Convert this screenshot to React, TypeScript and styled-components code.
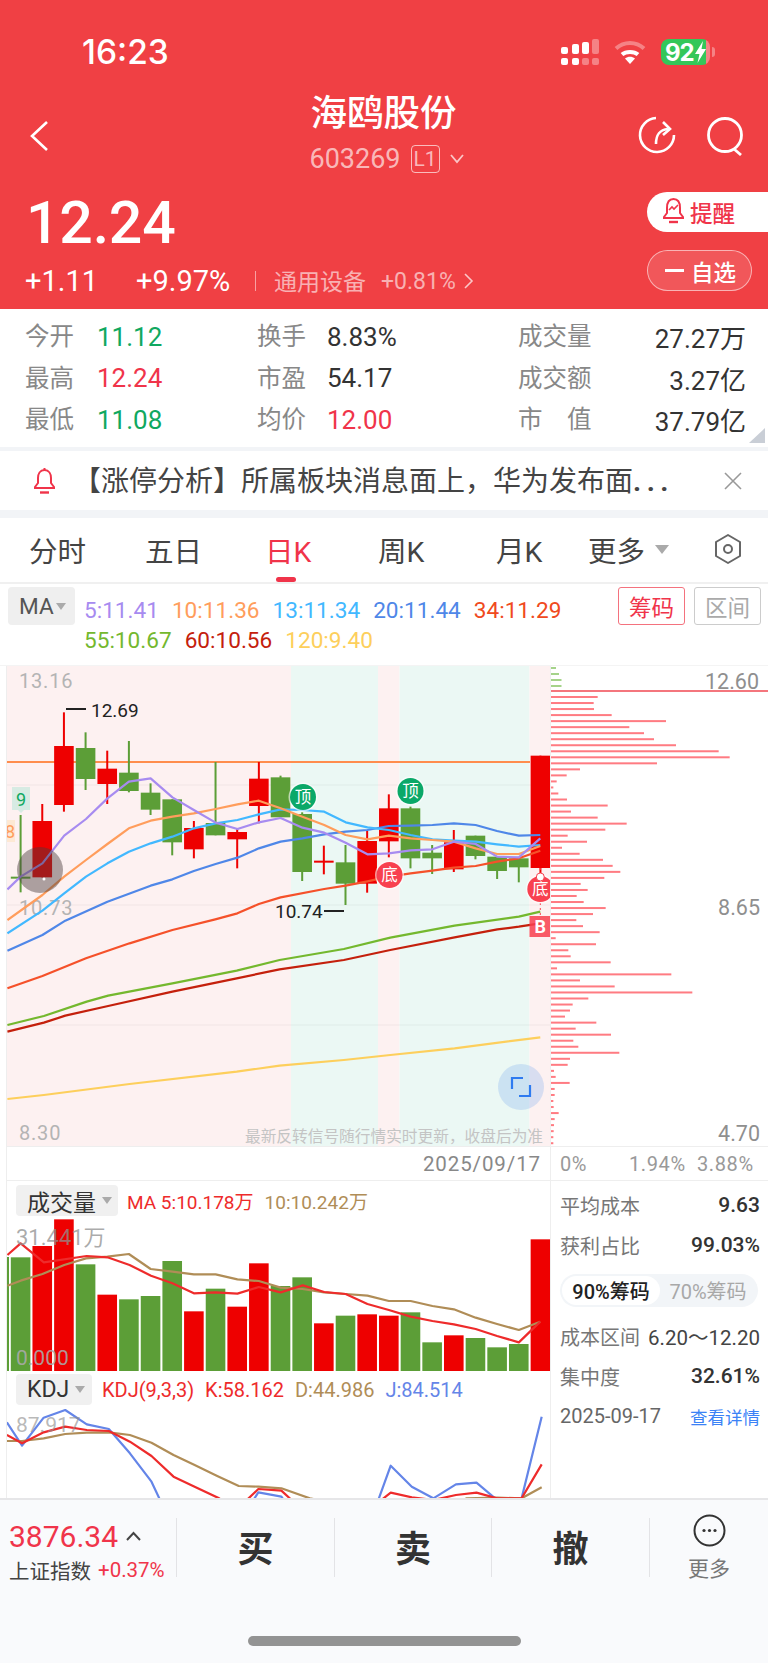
import * as React from 'react'
import styled, { createGlobalStyle } from 'styled-components'

const RED = '#f0344a'
const UP = '#ee0000'
const DOWN = '#5c9e37'
const FONT = 'Roboto, "Noto Sans CJK SC", sans-serif'

const GlobalStyle = createGlobalStyle`
    html, body { margin: 0; padding: 0; background: #fff; }
    * { box-sizing: border-box; }
    #root { width: 768px; height: 1663px; overflow: hidden; font-family: ${FONT}; }
`

const Page = styled.div`
    width: 768px;
    height: 1663px;
    display: flex;
    flex-direction: column;
    overflow: hidden;
    background: #fff;
`

/* ---------- red header ---------- */
const Header = styled.header`
    height: 309px;
    background: #f04044;
    color: #fff;
    flex: none;
`
const StatusBar = styled.div`
    height: 88px;
    padding: 16px 58px 0 82px;
    display: flex;
    align-items: center;
    justify-content: space-between;
`
const Clock = styled.span`
    font-family: Inter, sans-serif;
    font-size: 33.5px;
    font-weight: 500;
`
const StatusIcons = styled.div`
    display: flex;
    align-items: center;
    gap: 15px;
`
const Battery = styled.div`
    position: relative;
    width: 49px;
    height: 26px;
    border-radius: 8px;
    background: linear-gradient(90deg, #34c759 92%, rgba(255, 255, 255, .35) 92%);
    display: flex;
    align-items: center;
    padding-left: 4px;
    font-family: Inter, sans-serif;
    font-size: 24px;
    font-weight: 700;
    letter-spacing: -1px;
    &::after {
        content: '';
        position: absolute;
        right: -5px;
        top: 8px;
        width: 3px;
        height: 10px;
        border-radius: 0 3px 3px 0;
        background: rgba(255, 255, 255, .35);
    }
`
const NavBar = styled.nav`
    height: 92px;
    padding: 4px 24px 0 29px;
    display: grid;
    grid-template-columns: 281px 153px 1fr;
    align-items: center;
`
const TitleBlock = styled.div`
    align-self: flex-start;
    margin-top: -2px;
    display: flex;
    flex-direction: column;
    align-items: center;
`
const Title = styled.h1`
    margin: 2px 6px -2px 0;
    font-size: 36.5px;
    line-height: 44px;
    font-weight: 500;
    white-space: nowrap;
`
const CodeLine = styled.div`
    margin-top: 10px;
    height: 30px;
    display: flex;
    align-items: center;
    gap: 10px;
    font-size: 27px;
    color: rgba(255, 255, 255, .65);
`
const LevelTag = styled.span`
    width: 29px;
    height: 28px;
    border: 1px solid rgba(255, 255, 255, .65);
    border-radius: 4px;
    display: flex;
    align-items: center;
    justify-content: center;
    font-size: 21px;
`
const NavActions = styled.div`
    justify-self: end;
    display: flex;
    gap: 30px;
`
const QuoteRow = styled.div`
    height: 129px;
    display: flex;
    justify-content: space-between;
`
const QuoteLeft = styled.div`
    padding: 13px 0 0 25px;
`
const Price = styled.div`
    padding-left: 1px;
    font-size: 59px;
    line-height: 60px;
    font-weight: 500;
    letter-spacing: -.2px;
`
const ChangeLine = styled.div`
    margin-top: 13px;
    height: 30px;
    display: flex;
    align-items: center;
`
const ChangeValue = styled.span<{ $w: number }>`
    width: ${p => p.$w}px;
    font-size: 29px;
    white-space: nowrap;
`
const ChangeDivider = styled.span`
    width: 1px;
    height: 20px;
    margin-right: 18px;
    background: rgba(255, 255, 255, .5);
`
const SectorName = styled.span`
    width: 107px;
    margin-top: -2px;
    font-size: 23px;
    color: rgba(255, 255, 255, .6);
`
const SectorChange = styled.span`
    width: 83px;
    font-size: 23px;
    color: rgba(255, 255, 255, .6);
`
const QuoteRight = styled.div`
    width: 121px;
    padding-top: 12px;
    display: flex;
    flex-direction: column;
    gap: 18px;
    align-items: flex-start;
`
const RemindButton = styled.div`
    width: 121px;
    height: 40px;
    padding-left: 16px;
    border-radius: 20px 0 0 20px;
    background: #fff;
    color: ${RED};
    display: flex;
    align-items: center;
    gap: 6px;
    font-size: 22.5px;
    font-weight: 500;
`
const WatchButton = styled.div`
    width: 105px;
    height: 41px;
    padding-left: 17px;
    border-radius: 21px;
    border: 1px solid rgba(255, 255, 255, .55);
    background: rgba(255, 255, 255, .12);
    display: flex;
    align-items: center;
    gap: 7px;
    font-size: 22.5px;
    font-weight: 500;
`
const Minus = styled.span`
    width: 19px;
    height: 3px;
    background: #fff;
`

/* ---------- quote stats ---------- */
const Stats = styled.section`
    position: relative;
    height: 142px;
    flex: none;
    padding: 7px 22px 0 25px;
    border-bottom: 4px solid #f2f4f7;
    display: grid;
    grid-template-columns: 232px 261px 1fr;
    grid-auto-rows: 41.5px;
`
const Cell = styled.div<{ $labelWidth?: number }>`
    display: grid;
    grid-template-columns: ${p => (p.$labelWidth ? `${p.$labelWidth}px auto` : '1fr auto')};
    align-items: center;
`
const CellLabel = styled.span`
    margin-top: -4px;
    font-size: 24.5px;
    color: #888;
    white-space: pre;
`
const CellValue = styled.span<{ $color?: string }>`
    font-size: 26px;
    color: ${p => p.$color || '#333'};
`
const CornerMark = styled.span`
    position: absolute;
    right: 3px;
    bottom: 4px;
    width: 16px;
    height: 15px;
    background: #c9ced6;
    clip-path: polygon(100% 0, 100% 100%, 0 100%);
`

/* ---------- notice ---------- */
const Notice = styled.section`
    height: 59px;
    flex: none;
    padding: 0 26px 0 33px;
    display: flex;
    align-items: center;
    font-size: 28px;
    color: #444;
`
const NoticeText = styled.span`
    flex: 1;
    margin: -4px 0 0 17px;
    white-space: nowrap;
`
const Dots = styled.span`
    letter-spacing: 5.5px;
    font-weight: 700;
`
const Gap = styled.div`
    height: 8px;
    flex: none;
    background: #f2f4f7;
`

/* ---------- period tabs ---------- */
const Tabs = styled.nav`
    position: relative;
    height: 66px;
    flex: none;
    border-bottom: 2px solid #f0f0f0;
    font-size: 28.5px;
    color: #444;
    display: grid;
    grid-template-columns: 116px 120px 113px 118px 92px 126px 1fr;
    padding-left: 29px;
    align-items: center;
`
const Tab = styled.span<{ $active?: boolean }>`
    position: relative;
    height: 100%;
    padding-bottom: 2px;
    display: flex;
    align-items: center;
    gap: 10px;
    color: ${p => (p.$active ? RED : 'inherit')};
    ${p => p.$active && `
        &::after {
            content: '';
            position: absolute;
            left: 11px;
            bottom: 0;
            width: 20px;
            height: 5px;
            border-radius: 3px;
            background: ${RED};
        }
    `}
`
const Caret = styled.span<{ $size?: number; $color?: string }>`
    width: 0;
    height: 0;
    border-left: ${p => p.$size || 7}px solid transparent;
    border-right: ${p => p.$size || 7}px solid transparent;
    border-top: ${p => (p.$size || 7) + 2}px solid ${p => p.$color || '#aaa'};
`

/* ---------- ma legend ---------- */
const Legend = styled.section`
    height: 82px;
    flex: none;
    padding: 3px 7px 0 8px;
    display: flex;
    align-items: flex-start;
    font-size: 22.6px;
`
const IndicatorPick = styled.div`
    width: 67px;
    height: 38px;
    border-radius: 4px;
    background: #efefef;
    color: #555;
    display: flex;
    align-items: center;
    padding-left: 11px;
    gap: 2px;
`
const LegendLines = styled.div`
    margin: 8px 0 0 9px;
    display: flex;
    flex-direction: column;
`
const LegendLine = styled.div`
    height: 30px;
    display: flex;
    align-items: center;
    gap: 13px;
`
const LegendItem = styled.span<{ $color: string }>`
    color: ${p => p.$color};
    white-space: nowrap;
`
const LegendButtons = styled.div`
    margin-left: auto;
    display: flex;
    gap: 9px;
`
const OutlineButton = styled.span<{ $on?: boolean }>`
    width: 67px;
    height: 38px;
    border: 1px solid ${p => (p.$on ? '#f4727e' : '#ccc')};
    border-radius: 3px;
    color: ${p => (p.$on ? RED : '#aaa')};
    display: flex;
    align-items: center;
    justify-content: center;
    font-size: 22.5px;
`

/* ---------- charts ---------- */
const ChartBody = styled.section`
    flex: 1;
    min-height: 0;
    display: flex;
    border-top: 1px solid #f4f4f4;
    margin-top: -1px;
`
const LeftCol = styled.div`
    width: 544px;
    margin-left: 6px;
    flex: none;
    border-left: 1px solid #eee;
    display: flex;
    flex-direction: column;
`
const RightCol = styled.div`
    flex: 1;
    border-left: 1px solid #eee;
    display: flex;
    flex-direction: column;
`
const Plot = styled.svg`
    display: block;
    flex: none;
    font-family: ${FONT};
`
const AxisRow = styled.div`
    height: 35px;
    flex: none;
    border-top: 1px solid #eee;
    border-bottom: 1px solid #eee;
    display: flex;
    align-items: center;
    justify-content: flex-end;
    padding-right: 9px;
    font-size: 20.5px;
    letter-spacing: .9px;
    color: #888;
`
const ChipAxis = styled(AxisRow)`
    justify-content: flex-start;
    padding: 0 0 0 9px;
    font-size: 20px;
    letter-spacing: .6px;
    color: #999;
`
const ChipTick = styled.span<{ $w: number }>`
    width: ${p => p.$w}px;
`
const PanelLegend = styled.div<{ $h: number; $top: number }>`
    height: ${p => p.$h}px;
    flex: none;
    padding: ${p => p.$top}px 0 0 9px;
    display: flex;
    align-items: flex-start;
`
const PanelPick = styled.div<{ $w: number }>`
    width: ${p => p.$w}px;
    height: 31px;
    border-radius: 4px;
    background: #f0f0f0;
    color: #333;
    display: flex;
    align-items: center;
    gap: 6px;
    padding-left: 11px;
    font-size: 23px;
`
const PanelValues = styled.div<{ $offset: number; $size: number }>`
    height: 31px;
    margin-left: ${p => p.$offset}px;
    display: flex;
    align-items: center;
    gap: 11px;
    font-size: ${p => p.$size}px;
`
const ChipStats = styled.div`
    padding: 4px 8px 0 9px;
    display: flex;
    flex-direction: column;
`
const ChipRow = styled.div`
    height: 40px;
    display: flex;
    align-items: center;
    justify-content: space-between;
    font-size: 20px;
    color: #777;
    white-space: nowrap;
`
const ChipValue = styled.span`
    font-size: 21px;
    font-weight: 500;
    color: #333;
`
const RangeValue = styled.span`
    font-size: 20.5px;
    color: #444;
`
const Switcher = styled.div`
    height: 33px;
    margin: 9px 2px 9px 0;
    padding: 2px;
    border-radius: 17px;
    background: #f2f5f8;
    display: grid;
    grid-template-columns: 98px 1fr;
    font-size: 20px;
`
const SwitchItem = styled.span<{ $active?: boolean }>`
    border-radius: 15px;
    background: ${p => (p.$active ? '#fff' : 'transparent')};
    color: ${p => (p.$active ? '#222' : '#a8a8a8')};
    font-weight: ${p => (p.$active ? 500 : 400)};
    display: flex;
    align-items: center;
    justify-content: center;
    white-space: nowrap;
`
const DateText = styled.span`
    font-size: 20px;
    color: #666;
`
const DetailLink = styled.span`
    font-size: 17.5px;
    color: #3b82f6;
`

/* ---------- bottom bar ---------- */
const BottomBar = styled.footer`
    position: relative;
    height: 165px;
    flex: none;
    border-top: 2px solid #e6e6e8;
    background: #f9fafc;
    display: flex;
    padding-top: 18px;
    align-items: flex-start;
`
const IndexCell = styled.div`
    width: 177px;
    height: 59px;
    padding-left: 9px;
    border-right: 1px solid #e3e3e6;
`
const IndexPrice = styled.div`
    height: 36px;
    display: flex;
    align-items: center;
    gap: 8px;
    font-size: 30px;
    color: ${RED};
`
const IndexName = styled.div`
    margin-top: 1px;
    display: flex;
    align-items: center;
    gap: 7px;
    font-size: 20.5px;
    color: #444;
`
const IndexChange = styled.span`
    color: ${RED};
`
const TradeCell = styled.div<{ $w: number }>`
    width: ${p => p.$w}px;
    height: 59px;
    padding-bottom: 4px;
    border-right: 1px solid #e3e3e6;
    display: flex;
    align-items: center;
    justify-content: center;
    font-size: 36px;
    font-weight: 700;
    color: #333;
`
const MoreCell = styled.div`
    flex: 1;
    margin-top: -4px;
    display: flex;
    flex-direction: column;
    align-items: center;
    gap: 5px;
    font-size: 21px;
    color: #777;
`
const HomeBar = styled.div`
    position: absolute;
    left: 248px;
    bottom: 17px;
    width: 273px;
    height: 10px;
    border-radius: 5px;
    background: #939393;
`

/* ---------- data, read off the chart in px ---------- */
type Pt = number[]
const candleX = (i: number) => 19.6 + 21.66 * i

// wick top, body top, body bottom, wick bottom, up?
const candles: [number, number, number, number, boolean][] = [
    [465, 650, 656, 697, false], [432, 483, 652, 652, true], [157, 258, 435, 455, true],
    [217, 264, 357, 390, false], [272, 326, 372, 432, true], [243, 338, 393, 397, false],
    [370, 398, 449, 465, false], [418, 418, 547, 586, false], [483, 504, 568, 595, true],
    [306, 489, 526, 526, false], [506, 516, 538, 625, true], [306, 356, 438, 490, true],
    [347, 352, 472, 472, false], [457, 462, 636, 663, false], [557, 602, 606, 643, true],
    [555, 607, 671, 735, false], [513, 543, 671, 698, true], [403, 445, 544, 592, true],
    [440, 445, 595, 625, false], [555, 578, 595, 642, false], [510, 547, 628, 636, true],
    [527, 527, 588, 598, false], [590, 590, 633, 657, false], [595, 595, 622, 667, false],
    [287, 287, 624, 640, true],
]

const ma5: Pt[] = [[18, 688], [55, 650], [116, 610], [177, 527], [238, 477], [298, 415], [358, 365], [419, 355], [480, 412], [540, 450], [601, 488], [662, 507], [722, 487], [783, 474], [844, 503], [905, 518], [965, 548], [1026, 583], [1086, 580], [1147, 571], [1208, 568], [1268, 545], [1329, 552], [1389, 590], [1450, 592], [1510, 535]]
const ma10: Pt[] = [[18, 780], [116, 705], [177, 650], [238, 600], [298, 552], [358, 505], [419, 482], [480, 470], [540, 460], [601, 447], [662, 433], [722, 422], [783, 445], [844, 470], [905, 495], [965, 525], [1026, 538], [1086, 527], [1147, 535], [1208, 540], [1268, 545], [1329, 565], [1389, 582], [1450, 582], [1510, 558]]
const ma13: Pt[] = [[18, 820], [116, 752], [177, 700], [238, 650], [298, 610], [358, 575], [419, 550], [480, 530], [540, 505], [601, 490], [662, 480], [722, 463], [783, 448], [844, 450], [905, 455], [965, 487], [1026, 502], [1086, 510], [1147, 525], [1208, 538], [1268, 542], [1329, 545], [1389, 553], [1450, 560], [1510, 555]]
const ma20: Pt[] = [[18, 872], [116, 825], [180, 782], [298, 725], [419, 677], [480, 658], [540, 633], [601, 612], [662, 593], [722, 565], [783, 545], [844, 535], [905, 523], [965, 515], [1026, 510], [1086, 498], [1147, 497], [1208, 495], [1268, 490], [1329, 495], [1389, 513], [1450, 527], [1510, 525]]
const ma34: Pt[] = [[18, 985], [116, 948], [238, 895], [360, 850], [480, 810], [600, 778], [662, 760], [722, 732], [783, 712], [905, 687], [965, 677], [1026, 664], [1086, 650], [1147, 640], [1208, 632], [1268, 623], [1329, 618], [1389, 605], [1450, 595], [1510, 572]]
const ma55: Pt[] = [[18, 1095], [120, 1068], [240, 1025], [300, 1007], [480, 970], [660, 932], [780, 900], [960, 867], [1090, 833], [1270, 797], [1450, 770], [1510, 755]]
const ma60: Pt[] = [[18, 1115], [120, 1088], [180, 1067], [300, 1038], [480, 995], [660, 955], [780, 928], [960, 900], [1090, 870], [1270, 832], [1390, 808], [1450, 800], [1510, 790]]
const ma120: Pt[] = [[18, 1317], [120, 1305], [360, 1272], [660, 1235], [780, 1217], [960, 1200], [1090, 1185], [1270, 1165], [1510, 1132]]

const chipBars = [173, 161, 162, 215, 378, 268, 312, 342, 408, 536, 569, 351, 120, 80, 50, 40, 55, 81, 203, 93, 173, 260, 196, 83, 141, 66, 119, 189, 218, 241, 193, 122, 143, 110, 131, 197, 159, 109, 129, 179, 47, 168, 85, 92, 212, 51, 394, 120, 224, 457, 145, 98, 90, 75, 169, 107, 213, 100, 115, 238, 90, 83, 42, 47, 89, 44, 44, 40, 41, 56, 44, 42, 41, 40, 40]

const volumes: [number, boolean][] = [
    [322, false], [288, true], [208, true], [343, false], [434, true], [448, false], [438, false],
    [333, false], [484, true], [416, false], [470, true], [340, true], [408, false], [382, false],
    [520, true], [497, false], [493, true], [497, true], [487, false], [577, false], [556, true],
    [564, false], [592, false], [582, false], [268, true],
]
const volMa5: Pt[] = [[18, 315], [55, 280], [120, 337], [240, 318], [298, 322], [360, 345], [420, 377], [480, 400], [540, 430], [600, 427], [662, 431], [722, 411], [783, 427], [845, 406], [905, 426], [965, 432], [1026, 462], [1086, 480], [1147, 500], [1208, 513], [1268, 523], [1329, 537], [1389, 558], [1450, 577], [1510, 515]]
const volMa10: Pt[] = [[18, 407], [55, 392], [116, 372], [177, 345], [238, 325], [298, 320], [358, 312], [419, 357], [480, 365], [540, 373], [601, 373], [662, 388], [722, 393], [783, 413], [844, 417], [905, 427], [965, 432], [1026, 437], [1086, 453], [1147, 453], [1208, 468], [1268, 478], [1329, 503], [1389, 522], [1450, 540], [1510, 515]]

const kdjJ: Pt[] = [[12, 157], [43, 227], [87, 143], [131, 120], [175, 163], [220, 177], [263, 250], [307, 335], [350, 470], [480, 470], [525, 367], [572, 380], [615, 470], [750, 470], [795, 287], [838, 350], [882, 385], [928, 343], [970, 338], [1012, 390], [1062, 385], [1103, 140]]
const kdjK: Pt[] = [[12, 195], [43, 220], [87, 187], [131, 170], [175, 180], [220, 183], [263, 215], [307, 258], [352, 320], [395, 350], [445, 385], [480, 420], [525, 357], [572, 362], [615, 420], [750, 420], [795, 368], [838, 382], [882, 390], [928, 375], [970, 368], [1012, 385], [1062, 385], [1103, 283]]
const kdjD: Pt[] = [[12, 213], [43, 213], [87, 205], [131, 192], [175, 188], [220, 187], [263, 195], [307, 218], [352, 255], [395, 285], [440, 317], [485, 348], [525, 350], [572, 355], [630, 385], [750, 420], [900, 420], [950, 385], [1012, 383], [1062, 385], [1103, 352]]

const mapY = (y: number, base: number) => base + y / 3
const points = (pts: Pt[], sx: number, base: number) => pts.map(([x, y]) => `${x / sx},${mapY(y, base)}`).join(' ')

const Line = ({ pts, color, sx = 2.8, base = 660, width = 2.2 }: { pts: Pt[]; color: string; sx?: number; base?: number; width?: number }) => (
    <polyline points={points(pts, sx, base)} fill="none" stroke={color} strokeWidth={width} strokeLinejoin="round" />
)

const Badge = ({ x, y, label, color }: { x: number; y: number; label: string; color: string }) => (
    <g>
        <circle cx={x} cy={y} r={14.5} fill="#fff" opacity={.6} />
        <circle cx={x} cy={y} r={13} fill={color} />
        <text x={x} y={y + 6} textAnchor="middle" fontSize={16.5} fill="#fff">{label}</text>
    </g>
)

const KChart = () => {
    const y = (v: number) => mapY(v, 660)
    return (
        <Plot width={544} height={480} viewBox="6 666 544 480">
            <rect x={6} y={666} width={284} height={480} fill="#fdf1f1" />
            <rect x={290} y={666} width={87} height={480} fill="#ebf8f4" />
            <rect x={377} y={666} width={21.5} height={480} fill="#fdf1f1" />
            <rect x={398.5} y={666} width={130} height={480} fill="#ebf8f4" />
            <rect x={528.5} y={666} width={22} height={480} fill="#fdf1f1" />
            {[785, 905, 1025].map(g => <line key={g} x1={6} x2={550} y1={g} y2={g} stroke="#000" strokeOpacity={.05} />)}
            <line x1={6} x2={529} y1={762} y2={762} stroke="#ff8d4d" strokeWidth={2} />

            <text x={18} y={688} fontSize={20} letterSpacing={.8} fill="#b4b4b4">13.16</text>
            <text x={18} y={915} fontSize={20} letterSpacing={.8} fill="#b4b4b4">10.73</text>
            <text x={18} y={1140} fontSize={20} letterSpacing={.8} fill="#b4b4b4">8.30</text>

            <path d="M11 787h18v23h-6l-3 3-3-3h-6z" fill="#d7ebe3" />
            <text x={20} y={806} textAnchor="middle" fontSize={18} fill="#10a860">9</text>
            <rect x={0} y={820} width={14} height={22} fill="#fde9d4" />
            <text x={4} y={838} fontSize={18} fill="#ff9d5c">8</text>

            {candles.map(([wt, bt, bb, wb, up], i) => (
                <g key={i} fill={up ? UP : DOWN}>
                    <rect x={candleX(i) - 1} y={y(wt)} width={2} height={(wb - wt) / 3} />
                    <rect x={candleX(i) - 9.8} y={y(bt)} width={19.6} height={Math.max((bb - bt) / 3, 2)} />
                </g>
            ))}

            <Line pts={ma120} color="#fdcf5c" />
            <Line pts={ma55} color="#74b82e" />
            <Line pts={ma60} color="#c4200c" />
            <Line pts={ma34} color="#f5512a" />
            <Line pts={ma20} color="#4f87e8" />
            <Line pts={ma13} color="#42b8ff" />
            <Line pts={ma10} color="#ff9d5c" />
            <Line pts={ma5} color="#a78bf0" />

            <rect x={65} y={708} width={20} height={2} fill="#222" />
            <text x={90} y={717} fontSize={19} fill="#222">12.69</text>
            <text x={274} y={918} fontSize={19} fill="#222">10.74</text>
            <rect x={323} y={910} width={20} height={2} fill="#222" />

            <circle cx={39} cy={870} r={23} fill="#4a3c3c" fillOpacity={.45} />
            <circle cx={43} cy={879} r={1.5} fill="#fff" />

            <Badge x={302} y={797} label="顶" color="#0aa868" />
            <Badge x={409.5} y={791} label="顶" color="#0aa868" />
            <Badge x={388.5} y={875} label="底" color="#f8404f" />

            <line x1={539.3} x2={539.3} y1={868} y2={918} stroke="#f8404f" strokeDasharray="2 3" />
            <Badge x={539.3} y={889} label="底" color="#f8404f" />
            <circle cx={539.3} cy={877} r={4} fill="#fff" stroke="#f8404f" />
            <rect x={528.5} y={916} width={21.5} height={21} fill="#f8404f" fillOpacity={.85} />
            <text x={539.3} y={933} textAnchor="middle" fontSize={18} fontWeight={700} fill="#fff">B</text>

            <circle cx={520} cy={1087} r={23} fill="#7aa9ee" fillOpacity={.28} />
            <path d="M511 1089v-11h11M529 1085v11h-11" fill="none" stroke="#2f7bf0" strokeWidth={2.2} />

            <text x={244} y={1142} fontSize={15.7} fill="#c4c4c4">最新反转信号随行情实时更新，收盘后为准</text>
        </Plot>
    )
}

const ChipChart = () => (
    <Plot width={217} height={480} viewBox="551 666 217 480">
        {[[667, 5, '#a5d38a'], [673, 8, '#a5d38a'], [679, 10.5, '#a5d38a'], [685, 10.5, '#a5d38a']].map(([by, w, c]) => (
            <rect key={by as number} x={551} y={by as number} width={w as number} height={2} fill={c as string} />
        ))}
        <rect x={551} y={690} width={217} height={2} fill="#f4767d" />
        {chipBars.map((end, i) => (
            <rect key={i} x={551} y={696 + i * 6.03} width={(end - 33) / 3} height={2} fill="#ff7b82" />
        ))}
        <text x={759} y={689} textAnchor="end" fontSize={21.5} fill="#8f8f8f">12.60</text>
        <text x={760} y={915} textAnchor="end" fontSize={21.5} fill="#8f8f8f">8.65</text>
        <text x={760} y={1141} textAnchor="end" fontSize={21.5} fill="#8f8f8f">4.70</text>
    </Plot>
)

const VolumeChart = () => (
    <Plot width={544} height={155} viewBox="6 1216 544 155">
        <rect x={6} y={1257} width={2} height={114} fill={DOWN} />
        {volumes.map(([top, up], i) => (
            <rect key={i} x={candleX(i) - 9.8} y={mapY(top, 1150)} width={19.6} height={(663 - top) / 3} fill={up ? UP : DOWN} />
        ))}
        <Line pts={volMa10} color="#b08d57" base={1150} />
        <Line pts={volMa5} color="#ee2b2b" base={1150} />
        <text x={15} y={1245} fontSize={22} fill="#8f8f8f" fillOpacity={.75}>31.441万</text>
        <text x={15} y={1365} fontSize={21} fill="#aaa" fillOpacity={.9}>0.000</text>
    </Plot>
)

const KdjChart = () => (
    <Plot width={544} height={93} viewBox="6 1405 544 93">
        <Line pts={kdjJ} color="#6485e8" sx={2.04} base={1370} />
        <Line pts={kdjD} color="#b08d57" sx={2.04} base={1370} />
        <Line pts={kdjK} color="#ee2b2b" sx={2.04} base={1370} />
        <text x={15} y={1432} fontSize={21} fill="#8f8f8f" fillOpacity={.65}>87.917</text>
    </Plot>
)

/* ---------- icons ---------- */
const SignalIcon = () => (
    <svg width={38} height={26} viewBox="0 0 38 26">
        <g fill="#fff">
            <rect x={0} y={8} width={7} height={7} rx={2} />
            <rect x={11} y={5} width={7} height={10} rx={2} />
            <rect x={21} y={3} width={7} height={12} rx={2} />
            <rect x={0} y={19} width={7} height={7} rx={2} />
            <rect x={11} y={19} width={7} height={7} rx={2} />
        </g>
        <g fill="#fff" fillOpacity={.35}>
            <rect x={31} y={0} width={7} height={15} rx={2} />
            <rect x={21} y={19} width={7} height={7} rx={2} />
            <rect x={31} y={19} width={7} height={7} rx={2} />
        </g>
    </svg>
)
const WifiIcon = () => (
    <svg width={32} height={24} viewBox="0 0 32 24" fill="none" stroke="#fff">
        <path d="M2 8.5C10 1 22 1 30 8.5" strokeWidth={4} strokeOpacity={.35} />
        <path d="M8 14.5C12 11 20 11 24 14.5" strokeWidth={4} />
        <path d="M16 24l-5-5.5c3-2.4 7-2.4 10 0z" fill="#fff" stroke="none" />
    </svg>
)
const BoltIcon = () => (
    <svg width={13} height={22} viewBox="0 0 13 22">
        <path d="M9 0L1 13h4.5L3.5 22 12 8H7.5z" fill="#fff" />
    </svg>
)
const BackIcon = () => (
    <svg width={20} height={32} viewBox="0 0 20 32" fill="none" stroke="#fff" strokeWidth={2.6}>
        <path d="M18 2L3 16l15 14" />
    </svg>
)
const RefreshIcon = () => (
    <svg width={38} height={38} viewBox="0 0 38 38" fill="none" stroke="#fff" strokeWidth={2.6}>
        <path d="M18 2A17 17 0 1 0 36 19" />
        <path d="M18 28C18 19 21 14 30 13" />
        <path d="M25 6l7 7-7 6" />
    </svg>
)
const SearchIcon = () => (
    <svg width={38} height={40} viewBox="0 0 38 40" fill="none" stroke="#fff" strokeWidth={2.8}>
        <circle cx={19} cy={19} r={16.5} />
        <path d="M28 33l7 6" />
    </svg>
)
const ChevronDown = () => (
    <svg width={14} height={10} viewBox="0 0 14 10" fill="none" stroke="rgba(255,255,255,.7)" strokeWidth={1.8}>
        <path d="M1 1l6 7 6-7" />
    </svg>
)
const ChevronRight = () => (
    <svg width={10} height={16} viewBox="0 0 10 16" fill="none" stroke="rgba(255,255,255,.7)" strokeWidth={1.6}>
        <path d="M1 1l7 7-7 7" />
    </svg>
)
const RemindBell = () => (
    <svg width={21} height={32} viewBox="0 0 21 32" fill="none" stroke={RED} strokeWidth={2}>
        <path d="M10.500 3C5.500 3 4 7 4 12v5l-3 4v1h19v-1l-3-4v-5c0-5-1.500-9-6.500-9z" />
        <path d="M6 14l3-3 2 2 4-4" strokeWidth={1.6} />
        <path d="M6 26h9" strokeWidth={2.4} />
    </svg>
)
const NoticeBell = () => (
    <svg width={23} height={27} viewBox="0 0 23 27" fill="none" stroke={RED} strokeWidth={2}>
        <path d="M11.500 3C7 3 5 7 5 11v5l-3 4v1h19v-1l-3-4v-5c0-4-2-8-6.500-8z" />
        <path d="M11.500 1v2" />
        <path d="M7 25.500h9" strokeWidth={2.4} />
    </svg>
)
const CloseIcon = () => (
    <svg width={18} height={18} viewBox="0 0 18 18" fill="none" stroke="#999" strokeWidth={1.6}>
        <path d="M1 1l16 16M17 1L1 17" />
    </svg>
)
const HexIcon = () => (
    <svg width={28} height={30} viewBox="0 0 28 30" fill="none" stroke="#666" strokeWidth={2}>
        <path d="M14 1l12 7v14l-12 7-12-7V8z" strokeLinejoin="round" />
        <circle cx={14} cy={15} r={4} />
    </svg>
)
const CaretUp = () => (
    <svg width={15} height={10} viewBox="0 0 15 10" fill="none" stroke="#444" strokeWidth={2}>
        <path d="M1 9l6.500-7L14 9" />
    </svg>
)
const MoreIcon = () => (
    <svg width={33} height={33} viewBox="0 0 33 33" fill="none" stroke="#333" strokeWidth={2}>
        <circle cx={16.500} cy={16.500} r={15} />
        <g fill="#333" stroke="none">
            <circle cx={11} cy={16.500} r={1.6} />
            <circle cx={16.500} cy={16.500} r={1.6} />
            <circle cx={22} cy={16.500} r={1.6} />
        </g>
    </svg>
)

const GREEN_NUM = '#10a860'

const App = () => (
    <Page>
        <GlobalStyle />
        <Header>
            <StatusBar>
                <Clock>16:23</Clock>
                <StatusIcons>
                    <SignalIcon />
                    <WifiIcon />
                    <Battery>92<BoltIcon /></Battery>
                </StatusIcons>
            </StatusBar>
            <NavBar>
                <BackIcon />
                <TitleBlock>
                    <Title>海鸥股份</Title>
                    <CodeLine>
                        603269
                        <LevelTag>L1</LevelTag>
                        <ChevronDown />
                    </CodeLine>
                </TitleBlock>
                <NavActions>
                    <RefreshIcon />
                    <SearchIcon />
                </NavActions>
            </NavBar>
            <QuoteRow>
                <QuoteLeft>
                    <Price>12.24</Price>
                    <ChangeLine>
                        <ChangeValue $w={111}>+1.11</ChangeValue>
                        <ChangeValue $w={119}>+9.97%</ChangeValue>
                        <ChangeDivider />
                        <SectorName>通用设备</SectorName>
                        <SectorChange>+0.81%</SectorChange>
                        <ChevronRight />
                    </ChangeLine>
                </QuoteLeft>
                <QuoteRight>
                    <RemindButton><RemindBell />提醒</RemindButton>
                    <WatchButton><Minus />自选</WatchButton>
                </QuoteRight>
            </QuoteRow>
        </Header>

        <Stats>
            <Cell $labelWidth={72}><CellLabel>今开</CellLabel><CellValue $color={GREEN_NUM}>11.12</CellValue></Cell>
            <Cell $labelWidth={70}><CellLabel>换手</CellLabel><CellValue>8.83%</CellValue></Cell>
            <Cell><CellLabel>成交量</CellLabel><CellValue>27.27万</CellValue></Cell>
            <Cell $labelWidth={72}><CellLabel>最高</CellLabel><CellValue $color={RED}>12.24</CellValue></Cell>
            <Cell $labelWidth={70}><CellLabel>市盈</CellLabel><CellValue>54.17</CellValue></Cell>
            <Cell><CellLabel>成交额</CellLabel><CellValue>3.27亿</CellValue></Cell>
            <Cell $labelWidth={72}><CellLabel>最低</CellLabel><CellValue $color={GREEN_NUM}>11.08</CellValue></Cell>
            <Cell $labelWidth={70}><CellLabel>均价</CellLabel><CellValue $color={RED}>12.00</CellValue></Cell>
            <Cell><CellLabel>{'市　值'}</CellLabel><CellValue>37.79亿</CellValue></Cell>
            <CornerMark />
        </Stats>

        <Notice>
            <NoticeBell />
            <NoticeText>【涨停分析】所属板块消息面上，华为发布面<Dots>...</Dots></NoticeText>
            <CloseIcon />
        </Notice>
        <Gap />

        <Tabs>
            <Tab>分时</Tab>
            <Tab>五日</Tab>
            <Tab $active>日K</Tab>
            <Tab>周K</Tab>
            <Tab>月K</Tab>
            <Tab>更多<Caret /></Tab>
            <Tab><HexIcon /></Tab>
        </Tabs>

        <Legend>
            <IndicatorPick>MA<Caret $size={5} /></IndicatorPick>
            <LegendLines>
                <LegendLine>
                    <LegendItem $color="#a78bf0">5:11.41</LegendItem>
                    <LegendItem $color="#ff9d5c">10:11.36</LegendItem>
                    <LegendItem $color="#42b8ff">13:11.34</LegendItem>
                    <LegendItem $color="#4f87e8">20:11.44</LegendItem>
                    <LegendItem $color="#f04a20">34:11.29</LegendItem>
                </LegendLine>
                <LegendLine>
                    <LegendItem $color="#74b82e">55:10.67</LegendItem>
                    <LegendItem $color="#c4200c">60:10.56</LegendItem>
                    <LegendItem $color="#fdcf5c">120:9.40</LegendItem>
                </LegendLine>
            </LegendLines>
            <LegendButtons>
                <OutlineButton $on>筹码</OutlineButton>
                <OutlineButton>区间</OutlineButton>
            </LegendButtons>
        </Legend>

        <ChartBody>
            <LeftCol>
                <KChart />
                <AxisRow>2025/09/17</AxisRow>
                <PanelLegend $h={35} $top={4}>
                    <PanelPick $w={102}>成交量<Caret $size={5} /></PanelPick>
                    <PanelValues $offset={9} $size={19}>
                        <LegendItem $color="#ee2b2b">MA 5:10.178万</LegendItem>
                        <LegendItem $color="#b08d57">10:10.242万</LegendItem>
                    </PanelValues>
                </PanelLegend>
                <VolumeChart />
                <PanelLegend $h={34} $top={3}>
                    <PanelPick $w={76}>KDJ<Caret $size={5} /></PanelPick>
                    <PanelValues $offset={10} $size={20}>
                        <LegendItem $color="#ee2b2b">KDJ(9,3,3)</LegendItem>
                        <LegendItem $color="#ee2b2b">K:58.162</LegendItem>
                        <LegendItem $color="#b08d57">D:44.986</LegendItem>
                        <LegendItem $color="#6485e8">J:84.514</LegendItem>
                    </PanelValues>
                </PanelLegend>
                <KdjChart />
            </LeftCol>
            <RightCol>
                <ChipChart />
                <ChipAxis>
                    <ChipTick $w={69}>0%</ChipTick>
                    <ChipTick $w={68}>1.94%</ChipTick>
                    <ChipTick $w={60}>3.88%</ChipTick>
                </ChipAxis>
                <ChipStats>
                    <ChipRow>平均成本<ChipValue>9.63</ChipValue></ChipRow>
                    <ChipRow>获利占比<ChipValue>99.03%</ChipValue></ChipRow>
                    <Switcher>
                        <SwitchItem $active>90%筹码</SwitchItem>
                        <SwitchItem>70%筹码</SwitchItem>
                    </Switcher>
                    <ChipRow>成本区间<RangeValue>6.20～12.20</RangeValue></ChipRow>
                    <ChipRow>集中度<ChipValue>32.61%</ChipValue></ChipRow>
                    <ChipRow><DateText>2025-09-17</DateText><DetailLink>查看详情</DetailLink></ChipRow>
                </ChipStats>
            </RightCol>
        </ChartBody>

        <BottomBar>
            <IndexCell>
                <IndexPrice>3876.34<CaretUp /></IndexPrice>
                <IndexName>上证指数<IndexChange>+0.37%</IndexChange></IndexName>
            </IndexCell>
            <TradeCell $w={158}>买</TradeCell>
            <TradeCell $w={157}>卖</TradeCell>
            <TradeCell $w={158}>撤</TradeCell>
            <MoreCell><MoreIcon />更多</MoreCell>
            <HomeBar />
        </BottomBar>
    </Page>
)

export default App
